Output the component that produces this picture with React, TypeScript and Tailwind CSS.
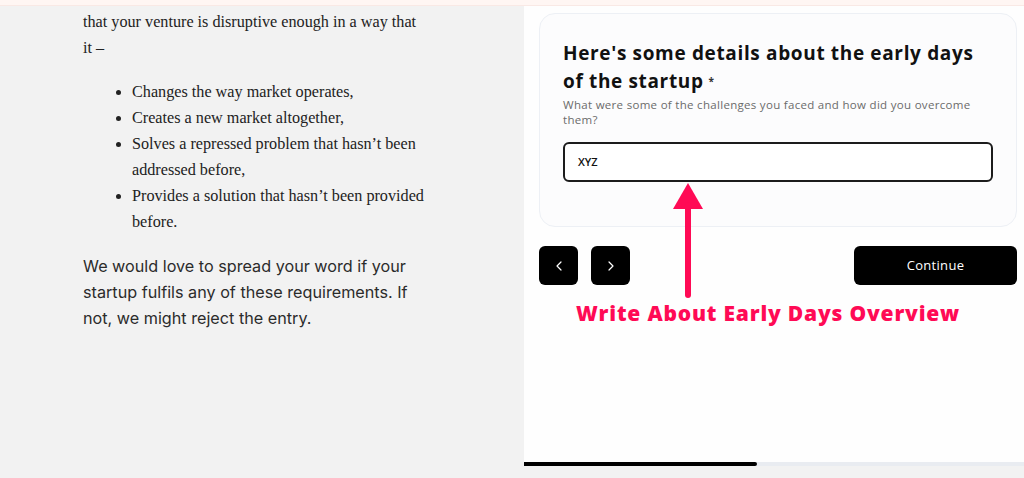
import React from "react";
import { ChevronLeft, ChevronRight } from "lucide-react";

export default function App() {
  const serif = { fontFamily: '"Liberation Serif", "Times New Roman", serif' };
  return (
    <div className="w-[1024px] h-[478px] bg-[#f2f2f2] flex flex-col overflow-hidden">
      <div className="h-[6px] bg-[#fff6f3] border-b border-[#f9e9e5] shrink-0" />
      <div className="flex flex-1 min-h-0">
        {/* Left article column */}
        <div className="w-[524px] shrink-0 pl-[83px] pt-[3px]">
          <p className="text-[16.2px] leading-[26px] text-[#222] whitespace-nowrap" style={serif}>
            that your venture is disruptive enough in a way that
            <br />
            it –
          </p>
          <ul className="mt-[18px] list-disc pl-[49px] text-[16.2px] leading-[26px] text-[#222] whitespace-nowrap" style={serif}>
            <li>Changes the way market operates,</li>
            <li>Creates a new market altogether,</li>
            <li>
              Solves a repressed problem that hasn’t been
              <br />
              addressed before,
            </li>
            <li>
              Provides a solution that hasn’t been provided
              <br />
              before.
            </li>
          </ul>
          <p className="mt-[18px] text-[16.2px] leading-[26px] text-[#2b2b2b] whitespace-nowrap font-['Inter',sans-serif]">
            We would love to spread your word if your
            <br />
            startup fulfils any of these requirements. If
            <br />
            not, we might reject the entry.
          </p>
        </div>

        {/* Right form column */}
        <div className="flex-1 flex flex-col">
          <div className="relative h-[456px] bg-[#fefefe] pl-[15px] pr-[8px] pt-[7px] font-['Open_Sans',sans-serif]">
            <div className="h-[214px] rounded-[16px] border border-[#edf0f5] bg-[#fcfcfd] pl-[23px] pr-[23px] pt-[25px]">
              <h2 className="text-[19px] leading-[28px] font-bold text-[#111] tracking-[0.65px]">
                Here's some details about the early days
                <br />
                of the startup<span className="relative top-[-3px] ml-[5px] text-[10px] text-[#333]">*</span>
              </h2>
              <p className="-mt-[1px] text-[11.5px] leading-[15px] text-[#6b6b6b] tracking-[0.3px]">
                What were some of the challenges you faced and how did you overcome
                <br />
                them?
              </p>
              <div className="mt-[15px] h-[40px] w-[430px] rounded-[6px] border-2 border-[#1c1c1c] bg-white flex items-center pl-[13px] text-[11px] font-semibold text-[#111]">
                XYZ
              </div>
            </div>

            <div className="mt-[19px] flex items-center">
              <button className="w-[39px] h-[39px] rounded-[6px] bg-black flex items-center justify-center text-white">
                <ChevronLeft size={16} strokeWidth={1.8} />
              </button>
              <button className="ml-[13px] w-[39px] h-[39px] rounded-[6px] bg-black flex items-center justify-center text-white">
                <ChevronRight size={16} strokeWidth={1.8} />
              </button>
              <button className="ml-auto w-[163px] h-[39px] rounded-[6px] bg-black text-white text-[13px] tracking-[0.3px]">
                Continue
              </button>
            </div>

            {/* Annotation arrow */}
            <svg className="absolute left-[147px] top-[175px]" width="34" height="120" viewBox="0 0 34 120">
              <polygon points="17,2 32,28 2,28" fill="#ff0a55" />
              <line x1="17" y1="24" x2="17" y2="114" stroke="#ff0a55" strokeWidth="6" strokeLinecap="round" />
            </svg>
            <div className="absolute left-[52px] top-[293px] text-[21px] leading-[28px] font-extrabold text-[#ff0a55] tracking-[0.8px] whitespace-nowrap">
              Write About Early Days Overview
            </div>
          </div>
          <div className="h-[4px] bg-[#e9ecf1] shrink-0">
            <div className="h-full w-[233px] bg-black rounded-r-full" />
          </div>
        </div>
      </div>
    </div>
  );
}
